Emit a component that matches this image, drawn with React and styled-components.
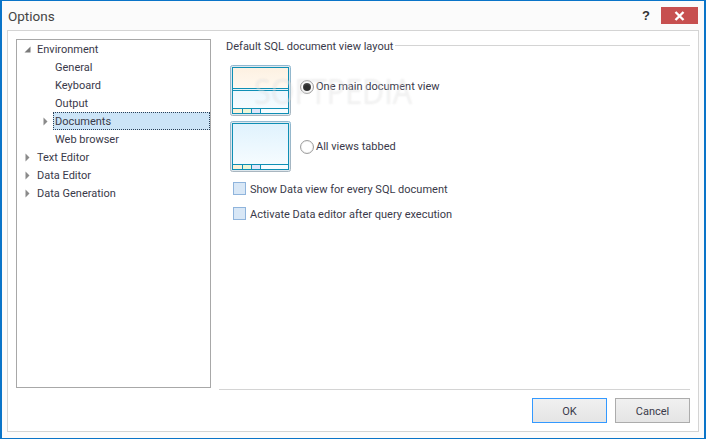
import React from "react";
import styled, { createGlobalStyle } from "styled-components";

const GlobalStyle = createGlobalStyle`
  html, body {
    margin: 0;
    padding: 0;
    background: #fff;
  }
`;

const Window = styled.div`
  position: relative;
  box-sizing: border-box;
  width: 706px;
  height: 439px;
  display: flex;
  flex-direction: column;
  overflow: hidden;
  background: #fbfbfb;
  border: 2px solid #0a74c8;
  border-top-width: 1px;
  border-bottom-width: 1px;
  font-family: Roboto, "Noto Sans", sans-serif;
  font-size: 11px;
  color: #3a3a4a;
`;

const TitleBar = styled.div`
  display: flex;
  align-items: flex-start;
  height: 29px;
  flex: none;
  padding-left: 6px;
  padding-right: 6px;
`;

const Title = styled.div`
  flex: 1;
  font-size: 13.5px;
  line-height: 31px;
  color: #444;
`;

const HelpButton = styled.div`
  width: 22px;
  margin-top: 6px;
  margin-right: 4px;
  font: bold 13px/18px "Liberation Sans", sans-serif;
  color: #333;
  text-align: center;
`;

const CloseButton = styled.div`
  width: 37px;
  height: 17px;
  margin-top: 6px;
  display: flex;
  align-items: center;
  justify-content: center;
  background: #c75050;
`;

const Panel = styled.div`
  flex: 1;
  display: flex;
  margin: 0 5px 6px 5px;
  padding: 8px 8px 0 8px;
  gap: 8px;
  background: #fff;
  border: 1px solid #d4d4d4;
`;

const Tree = styled.div`
  box-sizing: border-box;
  width: 195px;
  height: 349px;
  flex: none;
  border: 1px solid #a8a8a8;
`;

const TreeRow = styled.div`
  box-sizing: border-box;
  display: flex;
  align-items: center;
  height: 18px;
  padding-left: ${(p) => (p.$level === 1 ? "21px" : "3px")};
`;

const ArrowSlot = styled.span`
  width: 15px;
  flex: none;
  display: flex;
  align-items: center;
  justify-content: center;
`;

const RowLabel = styled.span`
  box-sizing: border-box;
  flex: 1;
  height: 18px;
  line-height: 18px;
  padding-left: 1px;
  border: 1px ${(p) => (p.$selected ? "dotted #2a4058" : "solid transparent")};
  background: ${(p) => (p.$selected ? "#cce4f7" : "transparent")};
`;

const Content = styled.div`
  flex: 1;
  display: flex;
  flex-direction: column;
  min-width: 0;
`;

const Settings = styled.div`
  flex: 1;
  padding-left: 7px;
`;

const SectionHead = styled.div`
  display: flex;
  align-items: flex-start;
  height: 14px;
  line-height: 16px;
  gap: 2px;
  white-space: nowrap;
  &::after {
    content: "";
    flex: 1;
    height: 1px;
    margin-top: 6px;
    background: #d4d4d4;
  }
`;

const LayoutOption = styled.div`
  display: flex;
  align-items: center;
  height: 51px;
  margin-top: ${(p) => p.$top}px;
  margin-left: 4px;
`;

const RadioLine = styled.div`
  display: flex;
  align-items: center;
  margin-bottom: ${(p) => p.$lift}px;
`;

const Radio = styled.span`
  box-sizing: border-box;
  width: 14px;
  height: 14px;
  margin-left: 9px;
  margin-right: 2px;
  flex: none;
  display: flex;
  align-items: center;
  justify-content: center;
  border-radius: 50%;
  border: 1px solid #a0a0a0;
  background: #fff;
  box-shadow: inset 0 0 1px #bbb;
  &::after {
    content: "";
    display: ${(p) => (p.$checked ? "block" : "none")};
    width: 8px;
    height: 8px;
    border-radius: 50%;
    background: radial-gradient(circle at 50% 60%, #2e2e2e 40%, #6a6a6a 100%);
  }
`;

const CheckRow = styled.div`
  display: flex;
  align-items: center;
  height: 13px;
  margin-top: ${(p) => p.$top}px;
  margin-left: 7px;
  gap: 4px;
`;

const CheckLabel = styled.span`
  padding-top: 2px;
`;

const CheckBox = styled.span`
  box-sizing: border-box;
  width: 13px;
  height: 13px;
  flex: none;
  background: #d8e7f6;
  border: 1px solid #8fb4dc;
`;

const Footer = styled.div`
  display: flex;
  justify-content: flex-end;
  gap: 8px;
  height: 42px;
  flex: none;
  padding-top: 8px;
  box-sizing: border-box;
  border-top: 1px solid #d4d4d4;
`;

const DialogButton = styled.div`
  box-sizing: border-box;
  width: 75px;
  height: 25px;
  padding-top: 2px;
  display: flex;
  align-items: center;
  justify-content: center;
  background: linear-gradient(#f0f0f0, #e5e5e5);
  border: 1px solid ${(p) => (p.$primary ? "#3399ff" : "#acacac")};
`;

const Watermark = styled.div`
  position: absolute;
  left: 252px;
  top: 68px;
  font: 35px/44px "Open Sans", sans-serif;
  color: rgba(255, 255, 255, 0.3);
  text-shadow: 0 0 2px rgba(120, 120, 120, 0.14);
  pointer-events: none;
  white-space: nowrap;
  transform: scaleX(0.87);
  transform-origin: left top;
`;

function Arrow({ open }) {
  return (
    <svg width="7" height="9" viewBox="0 0 7 9">
      {open ? (
        <path d="M6.5 1.5V7.5H0.5Z" fill="#7a7a7a" />
      ) : (
        <path d="M1.5 0.5L5.5 4.5L1.5 8.5Z" fill="#8a8a8a" />
      )}
    </svg>
  );
}

function LayoutThumb({ split }) {
  const id = split ? "a" : "b";
  return (
    <svg width="61" height="51" viewBox="0 0 61 51">
      <defs>
        <linearGradient id={`frame-${id}`} x1="0" y1="0" x2="0" y2="1">
          <stop offset="0" stopColor="#8fb8d0" />
          <stop offset="1" stopColor="#a9b6c0" />
        </linearGradient>
        <linearGradient id={`pane-${id}`} x1="0" y1="0" x2="0" y2="1">
          <stop offset="0" stopColor="#e0f2fd" />
          <stop offset="1" stopColor="#f8fdff" />
        </linearGradient>
        <linearGradient id={`warm-${id}`} x1="0" y1="0" x2="0" y2="1">
          <stop offset="0" stopColor="#fdf1e2" />
          <stop offset="1" stopColor="#fff8ef" />
        </linearGradient>
      </defs>
      <rect x="0.5" y="0.5" width="60" height="50" rx="2" fill="#dfe8ee" stroke={`url(#frame-${id})`} />
      <rect x="2.5" y="2.5" width="56" height="46" fill={`url(#pane-${id})`} stroke="#0f8fb5" />
      {split && (
        <>
          <rect x="3" y="3" width="55" height="20" fill={`url(#warm-${id})`} />
          <path d="M3 23.5H58M3 25.5H58" stroke="#0f8fb5" />
          <path d="M3 24.5H58" stroke="#e8f3f8" />
        </>
      )}
      <path d="M3 43.5H58" stroke="#0f8fb5" />
      <rect x="3" y="44" width="9" height="4" fill="#fdf3d8" />
      <rect x="13" y="44" width="8" height="4" fill="#eef7d8" />
      <rect x="22" y="44" width="8" height="4" fill="#dfe6fa" />
      <path d="M12.5 44V48M21.5 44V48M30.5 44V48" stroke="#0f8fb5" />
    </svg>
  );
}

const treeRows = [
  { label: "Environment", arrow: "open" },
  { label: "General", level: 1 },
  { label: "Keyboard", level: 1 },
  { label: "Output", level: 1 },
  { label: "Documents", level: 1, arrow: "closed", selected: true },
  { label: "Web browser", level: 1 },
  { label: "Text Editor", arrow: "closed" },
  { label: "Data Editor", arrow: "closed" },
  { label: "Data Generation", arrow: "closed" },
];

export default function App() {
  return (
    <Window>
      <GlobalStyle />
      <TitleBar>
        <Title>Options</Title>
        <HelpButton>?</HelpButton>
        <CloseButton>
          <svg width="11" height="10" viewBox="0 0 11 10">
            <path d="M1.5 1L9.5 9M9.5 1L1.5 9" stroke="#fff" strokeWidth="2.4" />
          </svg>
        </CloseButton>
      </TitleBar>
      <Panel>
        <Tree>
          {treeRows.map((row) => (
            <TreeRow key={row.label} $level={row.level}>
              <ArrowSlot>{row.arrow && <Arrow open={row.arrow === "open"} />}</ArrowSlot>
              <RowLabel $selected={row.selected}>{row.label}</RowLabel>
            </TreeRow>
          ))}
        </Tree>
        <Content>
          <Settings>
            <SectionHead>Default SQL document view layout</SectionHead>
            <LayoutOption $top={12}>
              <LayoutThumb split />
              <RadioLine $lift={8}>
                <Radio $checked />
                One main document view
              </RadioLine>
            </LayoutOption>
            <LayoutOption $top={5}>
              <LayoutThumb />
              <RadioLine $lift={0}>
                <Radio />
                All views tabbed
              </RadioLine>
            </LayoutOption>
            <CheckRow $top={10}>
              <CheckBox />
              <CheckLabel>Show Data view for every SQL document</CheckLabel>
            </CheckRow>
            <CheckRow $top={12}>
              <CheckBox />
              <CheckLabel>Activate Data editor after query execution</CheckLabel>
            </CheckRow>
          </Settings>
          <Footer>
            <DialogButton $primary>OK</DialogButton>
            <DialogButton>Cancel</DialogButton>
          </Footer>
        </Content>
      </Panel>
      <Watermark>SOFTPEDIA</Watermark>
    </Window>
  );
}
